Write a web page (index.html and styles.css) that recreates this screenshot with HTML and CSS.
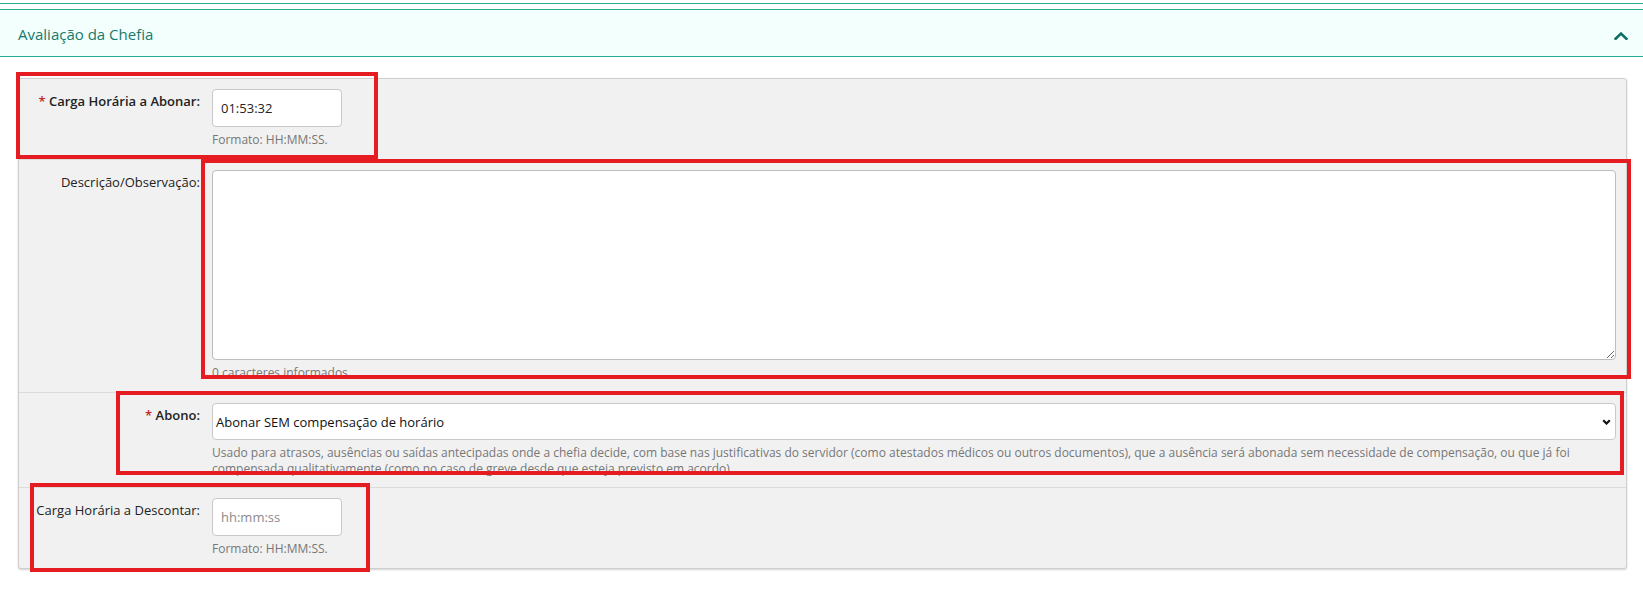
FILE: index.html
```html
<!DOCTYPE html>
<html lang="pt-BR">
<head>
<meta charset="utf-8">
<title>Avaliação da Chefia</title>
<link rel="stylesheet" href="styles.css">
</head>
<body>
<div class="page">
  <div class="section-rule"></div>

  <div class="panel-heading">
    <span class="panel-title">Avaliação da Chefia</span>
    <svg class="collapse-icon" width="14" height="8" viewBox="0 0 14 8" aria-hidden="true">
      <polyline points="1.6,6.8 7,1.6 12.4,6.8" fill="none" stroke="#0e6f63" stroke-width="2.6" stroke-linecap="square"/>
    </svg>
  </div>

  <form class="form-panel">
    <div class="form-row">
      <label class="form-label required" for="cargaAbonar"><span class="req">*</span> Carga Horária a Abonar:</label>
      <div class="form-field">
        <input class="form-input time-input" id="cargaAbonar" type="text" value="01:53:32">
        <p class="help">Formato: HH:MM:SS.</p>
      </div>
    </div>

    <div class="form-row">
      <label class="form-label" for="descricao">Descrição/Observação:</label>
      <div class="form-field">
        <textarea class="form-textarea" id="descricao"></textarea>
        <p class="help">0 caracteres informados.</p>
      </div>
    </div>

    <div class="form-row">
      <label class="form-label required" for="abono"><span class="req">*</span> Abono:</label>
      <div class="form-field">
        <div class="select-wrap">
          <select class="form-select" id="abono">
            <option>Abonar SEM compensação de horário</option>
            <option>Abonar COM compensação de horário</option>
          </select>
          <svg class="select-caret" width="9" height="6" viewBox="0 0 9 6" aria-hidden="true">
            <polyline points="1.2,1.2 4.5,4.5 7.8,1.2" fill="none" stroke="#111" stroke-width="2.2"/>
          </svg>
        </div>
        <p class="help help-long">Usado para atrasos, ausências ou saídas antecipadas onde a chefia decide, com base nas justificativas do servidor (como atestados médicos ou outros documentos), que a ausência será abonada sem necessidade de compensação, ou que já foi compensada qualitativamente (como no caso de greve desde que esteja previsto em acordo).</p>
      </div>
    </div>

    <div class="form-row">
      <label class="form-label" for="cargaDescontar">Carga Horária a Descontar:</label>
      <div class="form-field">
        <input class="form-input time-input" id="cargaDescontar" type="text" placeholder="hh:mm:ss">
        <p class="help">Formato: HH:MM:SS.</p>
      </div>
    </div>
  </form>

  <button class="btn-save" type="button">Salvar</button>

  <!-- highlight frames drawn over the form -->
  <div class="mark mark-abonar"></div>
  <div class="mark mark-descricao"></div>
  <div class="mark mark-abono"></div>
  <div class="mark mark-descontar"></div>
</div>
</body>
</html>
```

FILE: styles.css
```css
* {
  box-sizing: border-box;
}

html, body {
  margin: 0;
  padding: 0;
  background: #fff;
  font-family: "Open Sans", "Liberation Sans", sans-serif;
  color: #222;
}

.page {
  position: relative;
  overflow: hidden;
  height: 591px;
}

/* bottom edge of the previous section */
.section-rule {
  margin-top: 3px;
  height: 1px;
  background: #23ad97;
}

.panel-heading {
  margin-top: 5px;
  height: 48px;
  padding: 2px 15px 0 18px;
  display: flex;
  align-items: center;
  justify-content: space-between;
  background: #f2fffd;
  border-top: 1px solid #23ad97;
  border-bottom: 1px solid #23ad97;
}

.panel-title {
  font-size: 15px;
  color: #18796c;
}

.collapse-icon {
  display: block;
  margin-top: 3px;
}

.form-panel {
  margin: 21px 16px 0 18px;
  background: #f1f1f1;
  border: 1px solid #cfcfcf;
  border-radius: 3px;
  box-shadow: 0 1px 2px rgba(0, 0, 0, 0.18);
}

.form-row {
  display: grid;
  grid-template-columns: 181px 1fr;
  column-gap: 12px;
  padding: 10px 10px 11px 0;
  border-top: 1px solid #dcdcdc;
}

.form-row:first-child {
  border-top: none;
}

.form-label {
  padding-top: 3px;
  text-align: right;
  font-size: 13px;
  line-height: 18px;
  color: #222;
}

.form-label.required {
  font-weight: 600;
}

.req {
  color: #c0282a;
  font-weight: 600;
}

.form-field {
  min-width: 0;
}

.form-input {
  display: block;
  width: 130px;
  height: 38px;
  padding: 0 8px;
  font-family: inherit;
  font-size: 13px;
  color: #222;
  background: #fff;
  border: 1px solid #c9c9c9;
  border-radius: 4px;
  outline: none;
}

.form-input::placeholder {
  color: #8a8a8a;
}

.form-textarea {
  display: block;
  width: 100%;
  height: 190px;
  padding: 6px 8px;
  font-family: inherit;
  font-size: 13px;
  background: #fff;
  border: 1px solid #bdbdbd;
  border-radius: 4px;
  outline: none;
  resize: vertical;
}

.select-wrap {
  position: relative;
}

.form-select {
  display: block;
  width: 100%;
  height: 37px;
  padding: 0 24px 0 3px;
  font-family: inherit;
  font-size: 13px;
  color: #111;
  background: #fff;
  border: 1px solid #c9c9c9;
  border-radius: 4px;
  outline: none;
  appearance: none;
  -webkit-appearance: none;
}

.select-caret {
  position: absolute;
  right: 5px;
  top: 16px;
  pointer-events: none;
}

.help {
  margin: 5px 0 0;
  font-size: 12px;
  line-height: 16px;
  color: #777;
}

.help-long {
  line-height: 15.5px;
}

.btn-save {
  display: block;
  margin: 22px 0 0 33px;
  width: 47px;
  height: 32px;
  padding: 0;
  font-family: inherit;
  font-size: 13px;
  color: #fff;
  background: #28a745;
  border: 1px solid #1fae4b;
  border-radius: 4px;
}

/* red highlight frames */
.mark {
  position: absolute;
  border: 4px solid #e51d23;
  pointer-events: none;
}

.mark-abonar {
  left: 16px;
  top: 72px;
  width: 362px;
  height: 87px;
}

.mark-descricao {
  left: 201px;
  top: 159px;
  width: 1430px;
  height: 220px;
}

.mark-abono {
  left: 116px;
  top: 391px;
  width: 1508px;
  height: 84px;
}

.mark-descontar {
  left: 30px;
  top: 483px;
  width: 340px;
  height: 89px;
}
```
